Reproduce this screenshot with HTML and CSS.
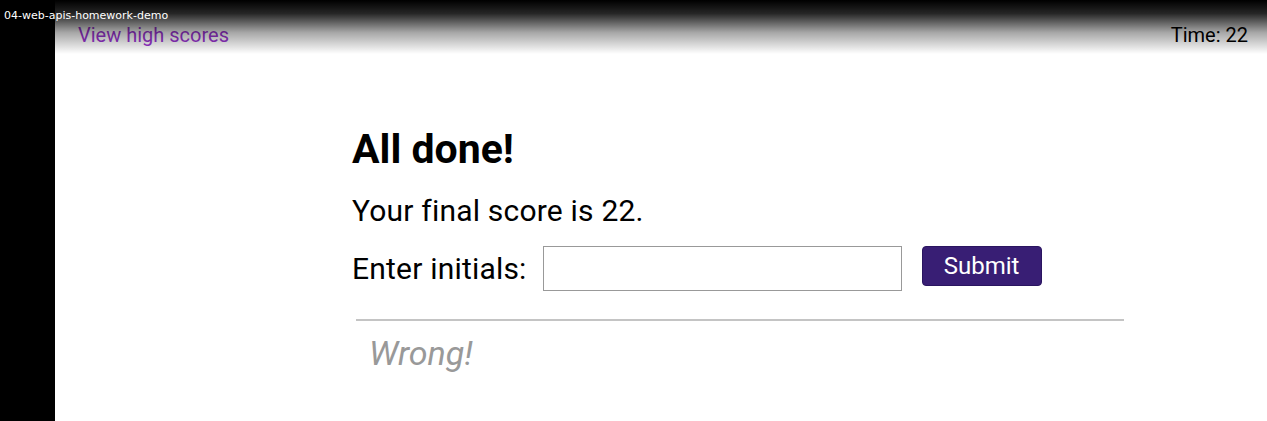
FILE: index.html
```html
<!DOCTYPE html>
<html lang="en">
<head>
<meta charset="utf-8">
<title>04-web-apis-homework-demo</title>
<link rel="stylesheet" href="styles.css">
</head>
<body>
<div class="frame">
  <div class="side"></div>
  <div class="page">
    <header class="topbar">
      <a class="scores" href="#">View high scores</a>
      <span class="timer">Time: 22</span>
    </header>
    <main class="quiz">
      <h1 class="title">All done!</h1>
      <p class="score">Your final score is 22.</p>
      <form class="entry">
        <label class="label" for="initials">Enter initials:</label>
        <input class="field" id="initials" type="text">
        <button class="submit" type="button">Submit</button>
      </form>
      <hr class="rule">
      <p class="result">Wrong!</p>
    </main>
  </div>
  <div class="shade"></div>
  <div class="caption">04-web-apis-homework-demo</div>
</div>
</body>
</html>
```
FILE: styles.css
```css
* { box-sizing: border-box; }
html, body { margin: 0; padding: 0; }
body {
  width: 1267px;
  height: 421px;
  overflow: hidden;
  font-family: Roboto, "Liberation Sans", sans-serif;
  background: #fff;
  color: #000;
}
.frame {
  position: relative;
  display: flex;
  height: 421px;
}
.side {
  width: 55px;
  flex: none;
  background: #000;
}
.page {
  flex: 1;
  background: #fff;
}
.topbar {
  display: flex;
  justify-content: space-between;
  padding: 23px 19px 0 23px;
  font-size: 20px;
  line-height: 24px;
}
.scores {
  color: #9a35d2;
  text-decoration: none;
}
.timer { color: #000; }
.quiz {
  margin: 0 0 0 297px;
  width: 772px;
  padding-top: 78px;
}
.title {
  margin: 0;
  font-size: 41px;
  line-height: 48px;
  font-weight: 700;
}
.score {
  margin: 20px 0 0;
  font-size: 30px;
  line-height: 36px;
  letter-spacing: 0.2px;
}
.entry {
  display: flex;
  align-items: flex-start;
  margin-top: 17px;
}
.label {
  font-size: 30px;
  line-height: 36px;
  letter-spacing: 0.2px;
  margin-top: 5px;
}
.field {
  width: 359px;
  height: 45px;
  margin-left: 16px;
  border: 1px solid #999;
  padding: 0 8px;
  font: inherit;
}
.submit {
  margin-left: 20px;
  width: 120px;
  height: 40px;
  background: #381e74;
  color: #fff;
  border: 1px solid #2a1560;
  border-radius: 4px;
  font-family: Roboto, sans-serif;
  font-size: 24px;
  line-height: 28px;
  padding: 0;
}
.rule {
  margin: 28px 0 0 4px;
  border: 0;
  border-top: 2px solid #c4c4c4;
  height: 0;
}
.result {
  margin: 12px 0 0 17px;
  font-size: 34px;
  line-height: 40px;
  font-style: italic;
  color: #999;
}
.shade {
  position: absolute;
  left: 0;
  top: 0;
  width: 100%;
  height: 54px;
  background: linear-gradient(to bottom, rgba(0,0,0,1) 0%, rgba(0,0,0,0.85) 25%, rgba(0,0,0,0.35) 60%, rgba(0,0,0,0) 100%);
  pointer-events: none;
}
.caption {
  position: absolute;
  left: 4px;
  top: 9px;
  color: #fff;
  font-family: "DejaVu Sans", "Noto Sans", sans-serif;
  font-size: 11px;
  line-height: 13px;
}
```
